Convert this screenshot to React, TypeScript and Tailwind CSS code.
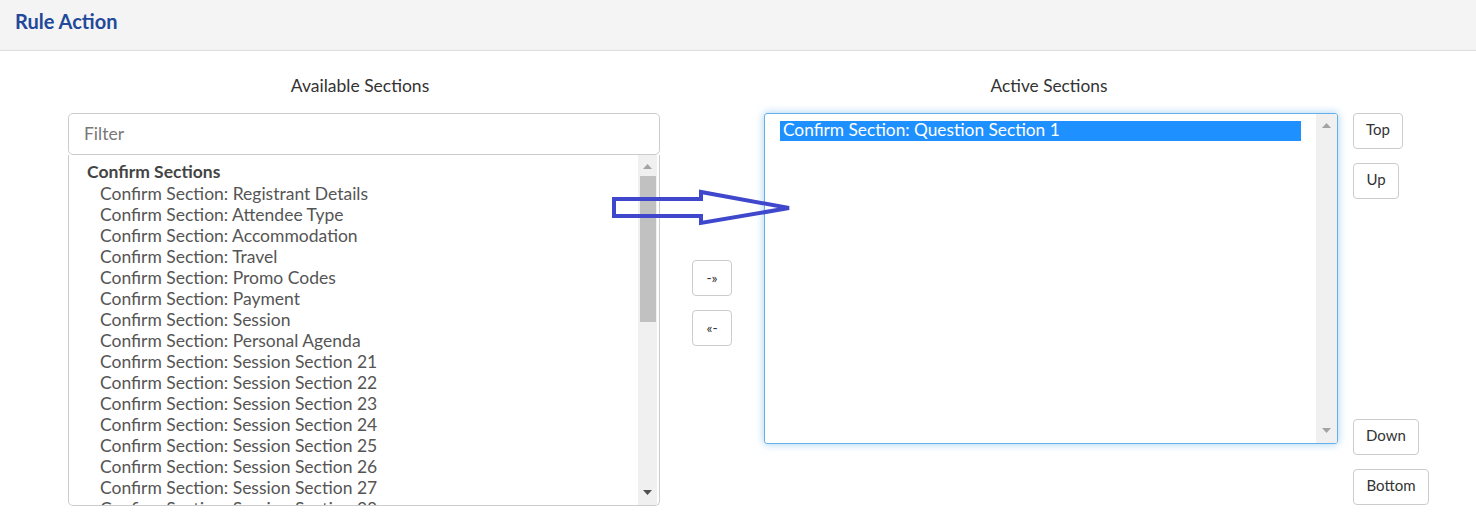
import React from "react";

const items = [
  "Registrant Details",
  "Attendee Type",
  "Accommodation",
  "Travel",
  "Promo Codes",
  "Payment",
  "Session",
  "Personal Agenda",
  "Session Section 21",
  "Session Section 22",
  "Session Section 23",
  "Session Section 24",
  "Session Section 25",
  "Session Section 26",
  "Session Section 27",
  "Session Section 28",
];

function UpTri({ color }: { color: string }) {
  return (
    <svg width="9" height="5" viewBox="0 0 9 5">
      <path d="M0 5 L4.5 0 L9 5 Z" fill={color} />
    </svg>
  );
}
function DownTri({ color }: { color: string }) {
  return (
    <svg width="9" height="5" viewBox="0 0 9 5">
      <path d="M0 0 L4.5 5 L9 0 Z" fill={color} />
    </svg>
  );
}

function Btn({ children, className }: { children: React.ReactNode; className: string }) {
  return (
    <div
      className={
        "flex items-center justify-center rounded-[4px] border border-[#ccc] bg-white text-[#333] " +
        className
      }
    >
      {children}
    </div>
  );
}

export default function App() {
  return (
    <div className="relative w-[1476px] h-[522px] overflow-hidden bg-white font-['Lato',sans-serif]">
      <div className="h-[51px] bg-[#f4f4f4] border-b border-[#dedede] pl-[15px] pt-[7px]">
        <h1 className="text-[20px] leading-[28px] font-bold text-[#22489a]">Rule Action</h1>
      </div>
      <div className="flex pl-[68px] pt-[23px]">
        {/* Left column */}
        <div className="w-[592px] flex flex-col">
          <div className="h-[24px] leading-[24px] text-center text-[17.5px] text-[#333] pr-[8px]">
            Available Sections
          </div>
          <div className="mt-[15px] h-[42px] rounded-[5px] border border-[#ccc] flex items-center pl-[15px] text-[17.5px] text-[#777]">
            Filter
          </div>
          <div className="h-[351px] border border-[#ccc] border-t-0 rounded-b-[5px] flex overflow-hidden">
            <div className="flex-1 overflow-hidden pt-[6px] text-[17.5px] leading-[21px] text-[#555]">
              <div className="pl-[18px] mb-[1px] font-bold text-[#444]">Confirm Sections</div>
              {items.map((t) => (
                <div key={t} className="pl-[31px] whitespace-nowrap">
                  Confirm Section: {t}
                </div>
              ))}
            </div>
            <div className="w-[19px] mr-[2px] bg-[#f0f0f0] flex flex-col items-center">
              <div className="h-[21px] flex items-center justify-center pt-[2px]">
                <UpTri color="#a3a3a3" />
              </div>
              <div className="w-[16px] h-[146px] bg-[#c1c1c1]" />
              <div className="flex-1" />
              <div className="h-[20px] flex items-center justify-center pb-[6px]">
                <DownTri color="#505050" />
              </div>
            </div>
          </div>
        </div>

        {/* Middle */}
        <div className="w-[104px] pl-[32px] flex flex-col">
          <Btn className="mt-[186px] w-[40px] h-[36px] text-[14px] pb-[2px]">-»</Btn>
          <Btn className="mt-[14px] w-[40px] h-[36px] text-[14px] pb-[2px]">«-</Btn>
        </div>

        {/* Right column */}
        <div className="w-[574px] flex flex-col">
          <div className="h-[24px] leading-[24px] text-center text-[17.3px] text-[#333] pr-[4px]">
            Active Sections
          </div>
          <div className="mt-[15px] h-[331px] rounded-[3px] border border-[#66afe9] shadow-[0_0_8px_rgba(102,175,233,0.6)] flex overflow-hidden">
            <div className="flex-1 pt-[7px] pl-[15px] pr-[15px]">
              <div className="h-[20px] leading-[17px] bg-[#1e90ff] text-white text-[17.3px] pl-[3px] whitespace-nowrap">
                Confirm Section: Question Section 1
              </div>
            </div>
            <div className="w-[21px] bg-[#f0f0f0] flex flex-col items-center">
              <div className="h-[20px] flex items-center justify-center pt-[3px]">
                <UpTri color="#a3a3a3" />
              </div>
              <div className="flex-1" />
              <div className="h-[20px] flex items-center justify-center pb-[6px]">
                <DownTri color="#a3a3a3" />
              </div>
            </div>
          </div>
        </div>

        {/* Right buttons */}
        <div className="pl-[15px] flex flex-col items-start text-[15px]">
          <Btn className="mt-[39px] w-[50px] h-[36px] pb-[3px]">Top</Btn>
          <Btn className="mt-[14px] w-[46px] h-[36px] pb-[3px]">Up</Btn>
          <Btn className="mt-[220px] w-[66px] h-[36px] pb-[3px]">Down</Btn>
          <Btn className="mt-[14px] w-[76px] h-[36px] pb-[3px]">Bottom</Btn>
        </div>
      </div>

      <svg
        className="absolute left-[600px] top-[180px]"
        width="200"
        height="60"
        viewBox="600 180 200 60"
      >
        <path
          d="M614 199 L701 199 L701 192 L789 208 L701 223 L701 216 L614 216 Z"
          fill="none"
          stroke="#3f48cc"
          strokeWidth="4"
          strokeLinejoin="miter"
        />
      </svg>
    </div>
  );
}
